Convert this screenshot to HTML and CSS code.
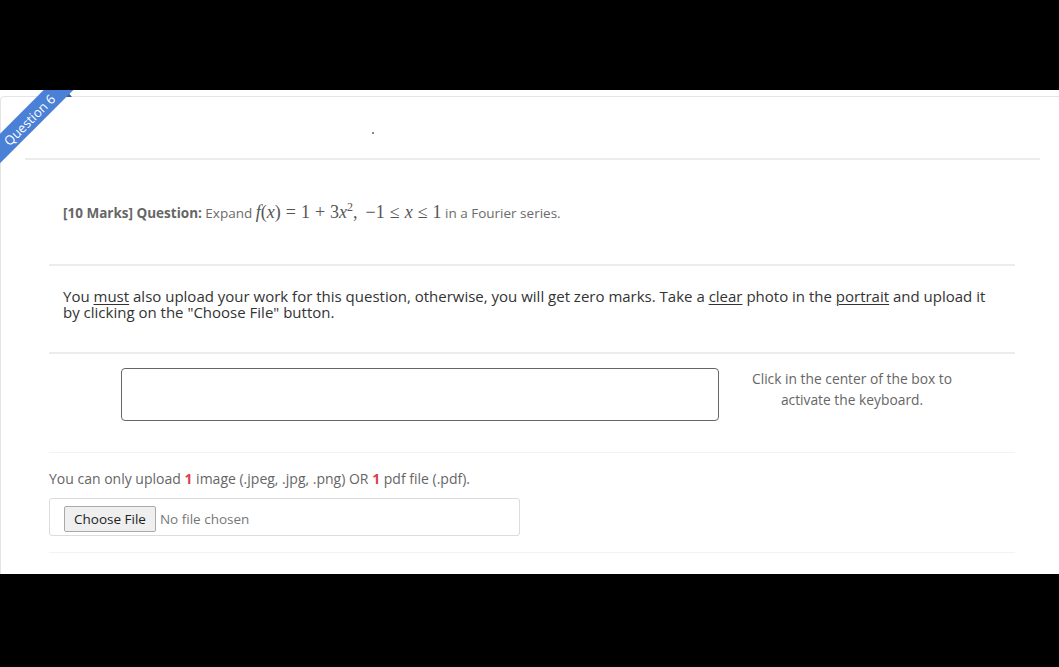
FILE: index.html
```html
<!DOCTYPE html>
<html>
<head>
<meta charset="utf-8">
<link rel="stylesheet" href="styles.css">
</head>
<body>
<div class="screen">
  <div class="ribbon"><span>Question 6</span></div>
  <svg class="fold" width="14" height="8" viewBox="0 0 14 8"><polygon points="0,0 8,0 14,7 6,7" fill="#2f5fa8"/></svg>
  <div class="card">
    <div class="qhead"><span class="dot"></span></div>
    <div class="qbody">
      <div class="qtext">
        <p><b>[10 Marks] Question:</b> Expand <span class="math"><i>f</i>(<i>x</i>)<span class="op">=</span>1<span class="op">+</span>3<i>x</i><sup>2</sup>,<span class="sp"></span>−1<span class="op">≤</span><i>x</i><span class="op">≤</span>1</span> in a Fourier series.</p>
      </div>
      <div class="note">
        <p>You <u>must</u> also upload your work for this question, otherwise, you will get zero marks. Take a <u>clear</u> photo in the <u>portrait</u> and upload it by clicking on the "Choose File" button.</p>
      </div>
      <div class="answer">
        <div class="textbox"></div>
        <div class="hint">Click in the center of the box to<br>activate the keyboard.</div>
      </div>
      <div class="upload">
        <p class="limit">You can only upload <b>1</b> image (.jpeg, .jpg, .png) OR <b>1</b> pdf file (.pdf).</p>
        <div class="filebox"><span class="choose">Choose File</span><span class="nofile">No file chosen</span></div>
      </div>
    </div>
  </div>
</div>
</body>
</html>
```
FILE: styles.css
```css
html, body {
  margin: 0;
  padding: 0;
  background: #000;
}
body {
  font-family: "Open Sans", "Noto Sans", sans-serif;
  height: 667px;
  overflow: hidden;
}
.screen {
  margin-top: 90px;
  height: 484px;
  background: #fff;
  position: relative;
  overflow: hidden;
}
.card {
  margin-top: 6px;
  width: 1080px;
  height: 520px;
  border: 1px solid #e4e4e4;
  border-radius: 4px;
  box-sizing: border-box;
}
.ribbon {
  position: absolute;
  left: -31px;
  top: 19px;
  width: 120px;
  height: 21px;
  background: #4a80d6;
  transform: rotate(-45deg);
  z-index: 2;
  display: flex;
  justify-content: center;
  align-items: center;
}
.ribbon span {
  color: #fff;
  font-size: 13px;
  font-family: "Open Sans", sans-serif;
}
.fold {
  position: absolute;
  left: 58px;
  top: 0;
  z-index: 1;
}
.qhead {
  height: 61px;
  margin-left: 24px;
  width: 1015px;
  border-bottom: 2px solid #ececec;
  position: relative;
}
.dot {
  position: absolute;
  left: 347px;
  top: 35px;
  width: 2px;
  height: 2px;
  background: #888;
}
.qbody {
  margin-left: 48px;
  width: 966px;
}
.qtext {
  height: 104px;
  border-bottom: 2px solid #ececec;
  display: flex;
  align-items: center;
  padding-left: 14px;
}
.qtext p {
  margin: 0;
  font-size: 13.5px;
  color: #6b6b6b;
}
.qtext b {
  font-weight: 700;
  color: #666;
}
.math {
  font-family: "Liberation Serif", "DejaVu Serif", serif;
  font-size: 18px;
  color: #555;
}
.math .op {
  margin: 0 5px;
}
.math .sp {
  display: inline-block;
  width: 8px;
}
.math sup {
  font-size: 12px;
  line-height: 0;
}
.note {
  border-bottom: 2px solid #ececec;
  display: flex;
  align-items: center;
  padding-left: 14px;
  padding-bottom: 10px;
  box-sizing: border-box;
  height: 88px;
}
.note p {
  margin: 0;
  max-width: 935px;
  font-size: 15px;
  line-height: 16.5px;
  color: #333;
}
.note u {
  text-decoration-thickness: 1px;
  text-underline-offset: 2px;
}
.answer {
  height: 84px;
  padding-top: 14px;
  border-bottom: 1px solid #f3f3f3;
  display: flex;
}
.textbox {
  margin-left: 72px;
  width: 598px;
  height: 53px;
  border: 1px solid #666;
  border-radius: 4px;
  box-sizing: border-box;
}
.hint {
  margin-left: 22px;
  width: 222px;
  text-align: center;
  font-size: 13.8px;
  line-height: 21px;
  color: #666;
}
.upload {
  padding-top: 16px;
  padding-bottom: 16px;
  border-bottom: 1px solid #f3f3f3;
}
.limit {
  margin: 0 0 9px 0;
  font-size: 14px;
  line-height: 20px;
  color: #666;
}
.limit b {
  color: #d9414f;
  font-weight: 700;
}
.filebox {
  width: 471px;
  height: 38px;
  border: 1px solid #dcdcdc;
  border-radius: 3px;
  box-sizing: border-box;
  display: flex;
  align-items: center;
  padding-left: 14px;
  padding-top: 4px;
}
.choose {
  display: inline-block;
  height: 26px;
  line-height: 25px;
  padding: 0 9px;
  box-sizing: border-box;
  background: #efefef;
  border: 1px solid #aaa;
  border-radius: 2px;
  font-size: 13.5px;
  color: #222;
}
.nofile {
  margin-left: 4px;
  font-size: 13.5px;
  color: #777;
}
```
